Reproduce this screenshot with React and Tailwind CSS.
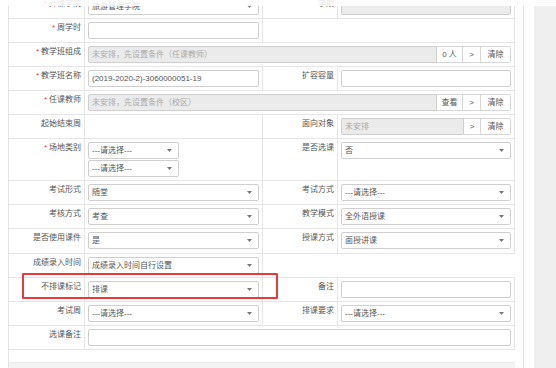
import React from 'react';

const CELL = 'border-r border-b border-[#e6e6e6]';
const BOX = 'h-[17px] border border-[#cfcfcf] rounded-[2px] px-[3px] text-[8px] leading-[15px] text-[#555] whitespace-nowrap overflow-hidden';

function Label({ req, children }) {
  return (
    <div className={`${CELL} pr-[3px] pt-[4px] text-right text-[8px] leading-[10px] text-[#555] whitespace-nowrap`}>
      {req && <span className="text-[#e33] mr-[2px]">*</span>}
      {children}
    </div>
  );
}

function Arrow() {
  return (
    <svg width="5" height="3" viewBox="0 0 5 3" className="shrink-0">
      <path d="M0 0h5L2.5 3z" fill="#777" />
    </svg>
  );
}

function Select({ value, className = '' }) {
  return (
    <div className={`${BOX} flex items-center justify-between pr-[6px] bg-white ${className}`}>
      <span>{value}</span>
      <Arrow />
    </div>
  );
}

function Text({ value = '', disabled, className = '' }) {
  return (
    <div className={`${BOX} ${disabled ? 'bg-[#ebebeb] text-[#aaa]' : 'bg-white'} ${className}`}>
      {value}
    </div>
  );
}

function Addon({ children, w, last }) {
  return (
    <div
      className={`h-[17px] ${w} shrink-0 border border-l-0 border-[#d6d6d6] bg-white text-center text-[8px] leading-[15px] text-[#555] ${last ? 'rounded-r-[2px]' : ''}`}
    >
      {children}
    </div>
  );
}

function Field({ children, span = '' }) {
  return <div className={`${CELL} px-[3px] pt-[3px] ${span}`}>{children}</div>;
}

function Row({ h = 'h-[24px]', children }) {
  return <div className={`grid grid-cols-[76px_178px_75px_177px] ${h}`}>{children}</div>;
}

export default function App() {
  return (
    <div
      className="relative w-[556px] h-[368px] overflow-hidden bg-white flex"
      style={{ fontFamily: '"Liberation Sans", "Noto Sans CJK SC", sans-serif' }}
    >
      <div className="w-[8px] shrink-0" />
      <div className="w-[516px] shrink-0 border-l border-r border-[#e3e3e3] flex flex-col">
        <div className="w-[506px] -mt-[5px]">
          <Row>
            <Label req>开课学院</Label>
            <Field><Select value="旅游管理学院" /></Field>
            <Label>学期</Label>
            <Field><Text disabled /></Field>
          </Row>
          <Row>
            <Label req>周学时</Label>
            <Field><Text /></Field>
            <div className={`${CELL} col-span-2`} />
          </Row>
          <Row>
            <Label req>教学班组成</Label>
            <Field span="col-span-3">
              <div className="flex">
                <Text disabled value="未安排，先设置条件（任课教师）" className="flex-1 rounded-r-none" />
                <Addon w="w-[26px]">0 人</Addon>
                <Addon w="w-[18px]">&gt;</Addon>
                <Addon w="w-[30px]" last>清除</Addon>
              </div>
            </Field>
          </Row>
          <Row>
            <Label req>教学班名称</Label>
            <Field><Text value="(2019-2020-2)-3060000051-19" /></Field>
            <Label>扩容容量</Label>
            <Field><Text /></Field>
          </Row>
          <Row>
            <Label req>任课教师</Label>
            <Field span="col-span-3">
              <div className="flex">
                <Text disabled value="未安排，先设置条件（校区）" className="flex-1 rounded-r-none" />
                <Addon w="w-[26px]">查看</Addon>
                <Addon w="w-[18px]">&gt;</Addon>
                <Addon w="w-[30px]" last>清除</Addon>
              </div>
            </Field>
          </Row>
          <Row>
            <Label>起始结束周</Label>
            <div className={CELL} />
            <Label>面向对象</Label>
            <Field>
              <div className="flex">
                <Text disabled value="未安排" className="flex-1 rounded-r-none" />
                <Addon w="w-[17px]">&gt;</Addon>
                <Addon w="w-[30px]" last>清除</Addon>
              </div>
            </Field>
          </Row>
          <Row h="h-[42px]">
            <Label req>场地类别</Label>
            <Field>
              <div className="flex flex-col gap-[1px] w-[91px]">
                <Select value="---请选择---" />
                <Select value="---请选择---" />
              </div>
            </Field>
            <Label>是否选课</Label>
            <Field><Select value="否" /></Field>
          </Row>
          <Row>
            <Label>考试形式</Label>
            <Field><Select value="随堂" /></Field>
            <Label>考试方式</Label>
            <Field><Select value="---请选择---" /></Field>
          </Row>
          <Row>
            <Label>考核方式</Label>
            <Field><Select value="考查" /></Field>
            <Label>教学模式</Label>
            <Field><Select value="全外语授课" /></Field>
          </Row>
          <Row h="h-[25px]">
            <Label>是否使用课件</Label>
            <Field><Select value="是" /></Field>
            <Label>授课方式</Label>
            <Field><Select value="面授讲课" /></Field>
          </Row>
          <Row>
            <Label>成绩录入时间</Label>
            <Field><Select value="成绩录入时间自行设置" /></Field>
            <div className="col-span-2 border-b border-[#e6e6e6]" />
          </Row>
          <Row>
            <Label>不排课标记</Label>
            <Field><Select value="排课" /></Field>
            <Label>备注</Label>
            <Field><Text /></Field>
          </Row>
          <Row>
            <Label>考试周</Label>
            <Field><Select value="---请选择---" /></Field>
            <Label>排课要求</Label>
            <Field><Select value="---请选择---" /></Field>
          </Row>
          <Row>
            <Label>选课备注</Label>
            <Field span="col-span-3"><Text /></Field>
          </Row>
        </div>
        <div className="h-[12px] shrink-0" />
        <div className="w-[506px] flex-1 bg-[#f3f3f3] border-t border-[#ebebeb]" />
      </div>
      <div className="w-[10px] shrink-0" />
      <div className="flex-1 bg-[#efefef]" />

      <div className="absolute left-0 top-0 w-full h-[6px] bg-white/85" />
      <div className="absolute left-[22px] top-[273px] w-[256px] h-[26px] border-2 border-[#e8393b] rounded-[1px]" />
    </div>
  );
}
